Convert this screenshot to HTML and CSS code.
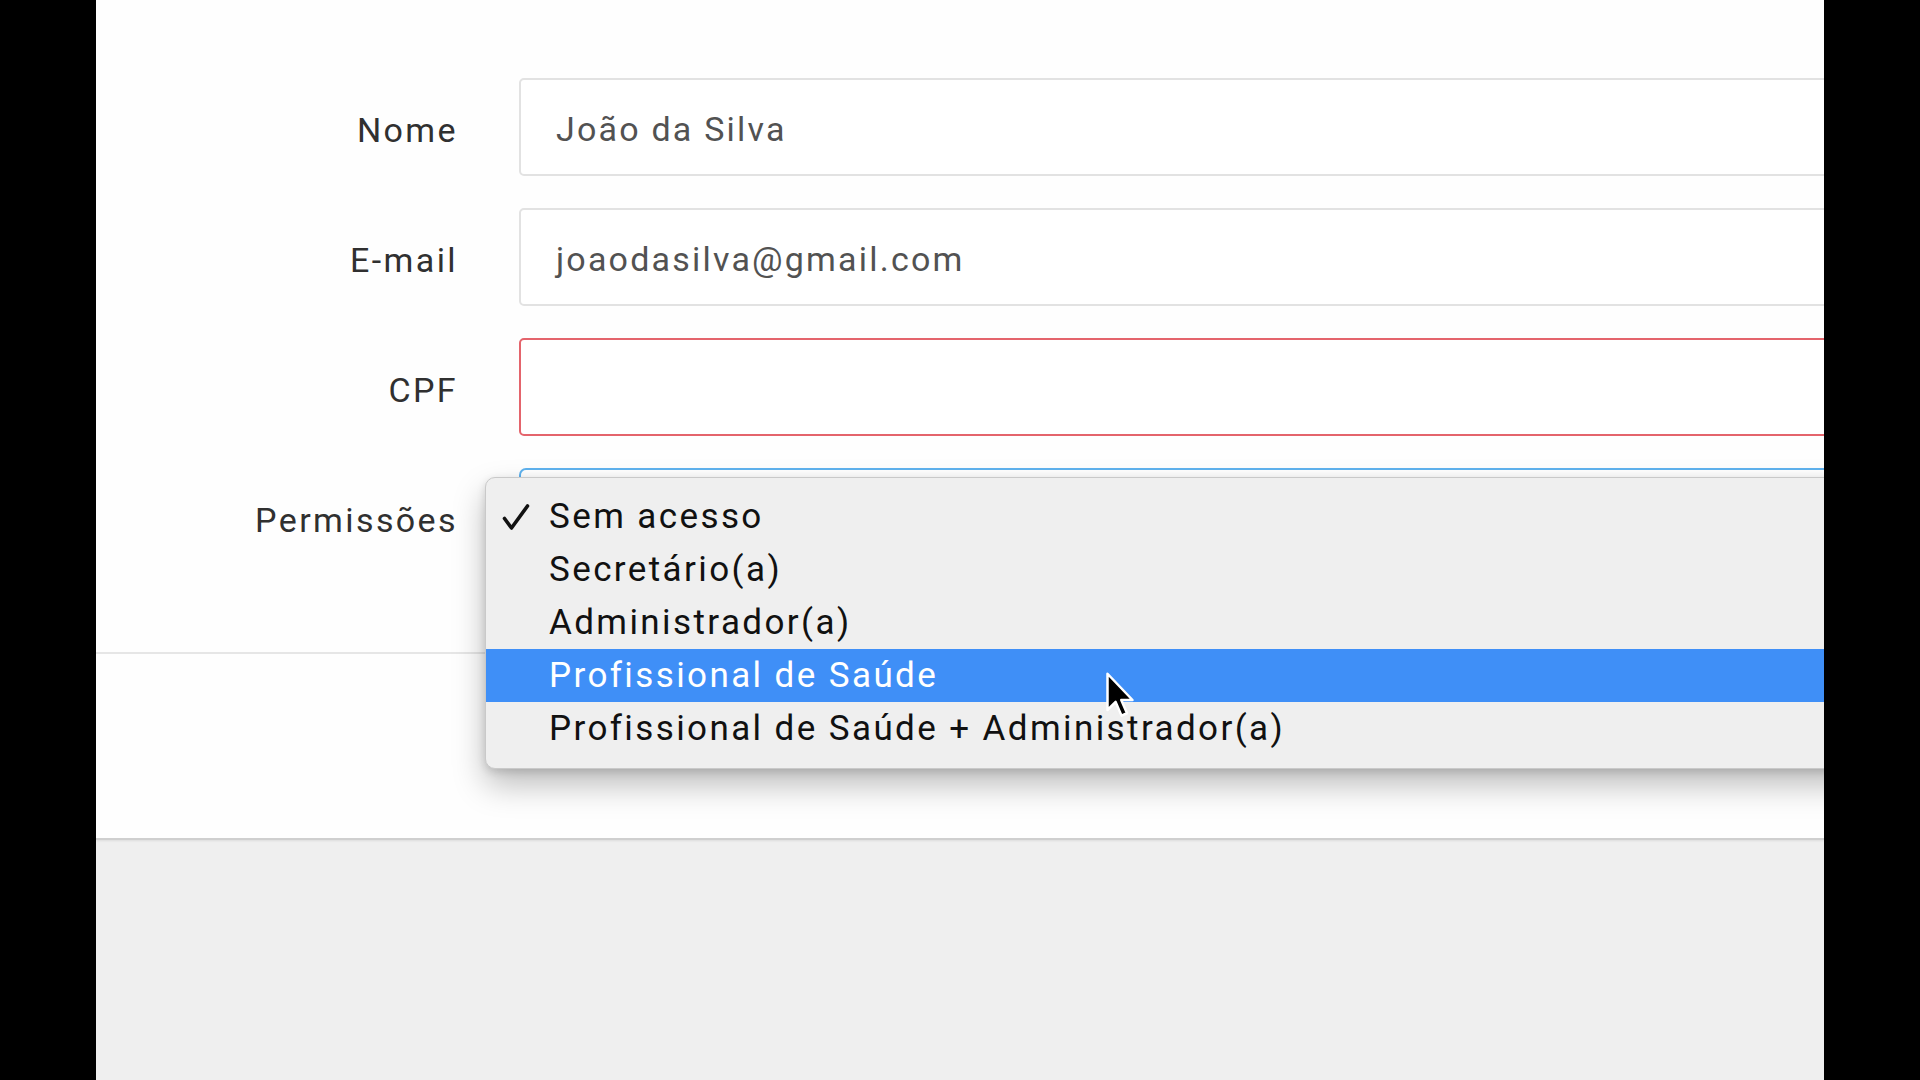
FILE: index.html
```html
<!DOCTYPE html>
<html lang="pt-BR">
<head>
<meta charset="utf-8">
<title>Usuário</title>
<link rel="stylesheet" href="styles.css">
</head>
<body>
<div class="screen">
  <div class="bezel"></div>
  <main class="content">
    <section class="panel">
      <form class="form">
        <div class="row">
          <label class="label">Nome</label>
          <div class="field">João da Silva</div>
        </div>
        <div class="row">
          <label class="label">E-mail</label>
          <div class="field">joaodasilva@gmail.com</div>
        </div>
        <div class="row">
          <label class="label">CPF</label>
          <div class="field field-error"></div>
        </div>
        <div class="row">
          <label class="label">Permissões</label>
          <div class="field field-focus"></div>
        </div>
      </form>
      <div class="footer"></div>

      <ul class="menu">
        <li class="item">
          <span class="check">
            <svg viewBox="0 0 28 28" width="28" height="28" aria-hidden="true"><path d="M2.5 15.5 L9.5 25 L25.5 3" fill="none" stroke="#111" stroke-width="3.6" stroke-linecap="round" stroke-linejoin="round"/></svg>
          </span>
          <span>Sem acesso</span>
        </li>
        <li class="item"><span class="check"></span><span>Secretário(a)</span></li>
        <li class="item"><span class="check"></span><span>Administrador(a)</span></li>
        <li class="item item-active"><span class="check"></span><span>Profissional de Saúde</span></li>
        <li class="item"><span class="check"></span><span>Profissional de Saúde + Administrador(a)</span></li>
      </ul>

      <svg class="cursor" viewBox="0 0 24 38" width="30" height="48" aria-hidden="true">
        <path d="M2 2 L2 31 L8.5 24.5 L13.2 35.5 L17.6 33.6 L13 23 L22 23 Z" fill="#000" stroke="#fff" stroke-width="2" stroke-linejoin="round"/>
      </svg>
    </section>
    <div class="backdrop"></div>
  </main>
  <div class="bezel"></div>
</div>
</body>
</html>
```
FILE: styles.css
```css
html, body {
  margin: 0;
  padding: 0;
  background: #000;
}

.screen {
  display: flex;
  width: 1920px;
  height: 1080px;
  overflow: hidden;
}

.bezel {
  width: 96px;
  flex: none;
  background: #000;
}

.content {
  flex: 1;
  display: flex;
  flex-direction: column;
  background: #efefef;
  overflow: hidden;
}

.panel {
  position: relative;
  height: 838px;
  flex: none;
  background: #fefefe;
  border-bottom: 2px solid #cfcfcf;
  box-shadow: 0 1px 2px rgba(0,0,0,0.08);
}

.form {
  display: flex;
  flex-direction: column;
  gap: 32px;
  padding-top: 78px;
}

.row {
  display: flex;
  align-items: center;
  gap: 61px;
}

.label {
  width: 362px;
  flex: none;
  box-sizing: border-box;
  padding-top: 6px;
  text-align: right;
  font-family: Roboto, "Liberation Sans", sans-serif;
  font-size: 34px;
  letter-spacing: 2.4px;
  color: #303030;
}

.field {
  flex: 1;
  margin-right: -40px;
  height: 98px;
  box-sizing: border-box;
  border: 2px solid #e2e2e2;
  border-radius: 5px;
  background: #fff;
  padding: 4px 35px 0;
  display: flex;
  align-items: center;
  font-family: Roboto, "Liberation Sans", sans-serif;
  font-size: 34px;
  letter-spacing: 2.2px;
  color: #525252;
}

.field-error {
  border-color: #e4646c;
}

.field-focus {
  border-color: #5fb2ee;
  border-radius: 7px;
}

.footer {
  margin-top: 86px;
  border-top: 2px solid #e6e6e6;
}

.menu {
  position: absolute;
  left: 389px;
  right: -40px;
  top: 477px;
  margin: 0;
  padding: 12px 0 13px;
  list-style: none;
  background: #efefef;
  border: 1px solid #c9c9c9;
  border-radius: 10px;
  box-shadow: 0 16px 32px rgba(0,0,0,0.26), 0 3px 8px rgba(0,0,0,0.14);
  font-family: Roboto, "Liberation Sans", sans-serif;
  font-size: 35px;
  letter-spacing: 2.4px;
  color: #111;
}

.item {
  display: flex;
  align-items: center;
  height: 53px;
  white-space: nowrap;
}

.check {
  width: 63px;
  flex: none;
  box-sizing: border-box;
  padding-left: 16px;
  display: flex;
  align-items: center;
}

.item-active {
  background: #3f8ff7;
  color: #fff;
}

.cursor {
  position: absolute;
  left: 1009px;
  top: 671px;
}

.backdrop {
  flex: 1;
  background: #efefef;
}
```
